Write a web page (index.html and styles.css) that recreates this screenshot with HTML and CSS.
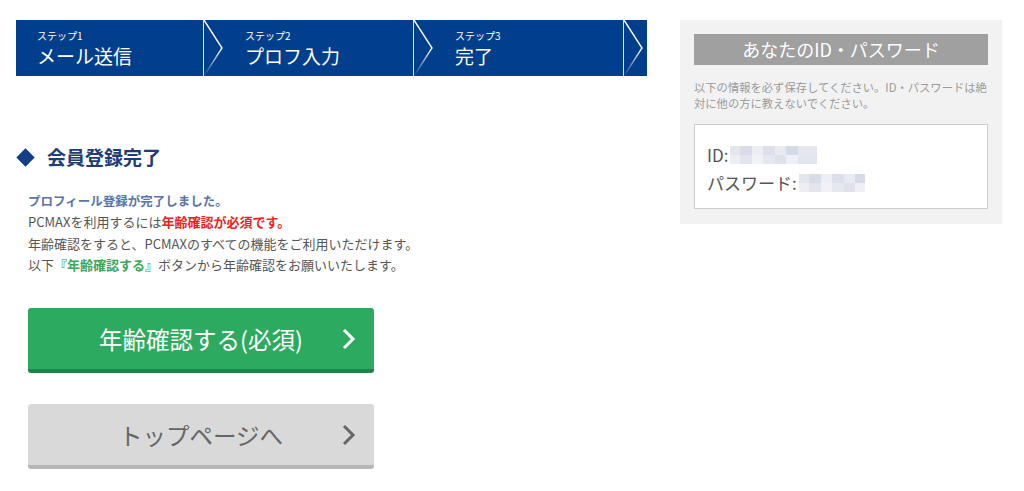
FILE: index.html
```html
<!DOCTYPE html>
<html lang="ja">
<head>
    <meta charset="UTF-8">
    <meta name="viewport" content="width=device-width, initial-scale=1.0">
    <title>会員登録完了</title>
    <link rel="stylesheet" href="styles.css">
</head>
<body>
    <div class="page">
        <div class="main">
            <div class="steps">
                <div class="step first">
                    <span class="step-no">ステップ1</span>
                    <span class="step-name">メール送信</span>
                </div>
                <svg class="sep" width="20" height="56" viewBox="0 0 20 56">
                    <defs>
                        <linearGradient id="fade" x1="0" y1="0" x2="0" y2="1">
                            <stop offset="0" stop-color="#fff"/>
                            <stop offset="0.5" stop-color="#fff"/>
                            <stop offset="1" stop-color="#fff" stop-opacity="0"/>
                        </linearGradient>
                    </defs>
                    <line x1="0.5" y1="0" x2="0.5" y2="56" stroke="#dfe6f2" stroke-width="1"/>
                    <polyline points="1,0 19,28 1,56" fill="none" stroke="url(#fade)" stroke-width="1.4"/>
                </svg>
                <div class="step">
                    <span class="step-no">ステップ2</span>
                    <span class="step-name">プロフ入力</span>
                </div>
                <svg class="sep" width="20" height="56" viewBox="0 0 20 56">
                    <line x1="0.5" y1="0" x2="0.5" y2="56" stroke="#dfe6f2" stroke-width="1"/>
                    <polyline points="1,0 19,28 1,56" fill="none" stroke="url(#fade)" stroke-width="1.4"/>
                </svg>
                <div class="step">
                    <span class="step-no">ステップ3</span>
                    <span class="step-name">完了</span>
                </div>
                <svg class="sep" width="20" height="56" viewBox="0 0 20 56">
                    <line x1="0.5" y1="0" x2="0.5" y2="56" stroke="#dfe6f2" stroke-width="1"/>
                    <polyline points="1,0 19,28 1,56" fill="none" stroke="url(#fade)" stroke-width="1.4"/>
                </svg>
                <div class="step tail"></div>
            </div>

            <h2 class="title"><span class="diamond"></span>会員登録完了</h2>

            <div class="message">
                <p class="lead">プロフィール登録が完了しました。</p>
                <p>PCMAXを利用するには<strong class="red">年齢確認が必須です。</strong></p>
                <p>年齢確認をすると、PCMAXのすべての機能をご利用いただけます。</p>
                <p>以下<strong class="green">『年齢確認する』</strong>ボタンから年齢確認をお願いいたします。</p>
            </div>

            <a class="btn btn-green" href="#">
                <span>年齢確認する(必須)</span>
                <svg class="arrow" width="14" height="22" viewBox="0 0 14 22"><polyline points="2,2 11,11 2,20" fill="none" stroke="#fff" stroke-width="3"/></svg>
            </a>
            <a class="btn btn-gray" href="#">
                <span>トップページへ</span>
                <svg class="arrow" width="14" height="22" viewBox="0 0 14 22"><polyline points="2,2 11,11 2,20" fill="none" stroke="#666" stroke-width="3"/></svg>
            </a>
        </div>

        <div class="side">
            <div class="side-title">あなたのID・パスワード</div>
            <p class="side-note">以下の情報を必ず保存してください。ID・パスワードは絶対に他の方に教えないでください。</p>
            <div class="account">
                <div class="account-row">ID:<span class="blur blur-id"></span></div>
                <div class="account-row">パスワード:<span class="blur blur-pw"></span></div>
            </div>
        </div>
    </div>
</body>
</html>
```

FILE: styles.css
```css
body {
    margin: 0;
    font-family: 'Noto Sans CJK JP', 'Noto Sans', sans-serif;
    color: #555;
    background-color: #fff;
}
.page {
    display: flex;
    align-items: flex-start;
    gap: 33px;
    padding: 20px 0 0 16px;
}
.main {
    width: 631px;
}

/* steps */
.steps {
    display: flex;
    height: 56px;
    background-color: #013e8b;
    color: #fff;
}
.step {
    width: 168px;
    padding-left: 22px;
    display: flex;
    flex-direction: column;
    justify-content: center;
    gap: 4px;
}
.step.first {
    width: 166px;
    padding-left: 21px;
}
.step.tail {
    width: 4px;
    padding: 0;
}
.sep {
    display: block;
    flex: none;
}
.step-no {
    font-size: 10px;
    line-height: 11px;
}
.step-name {
    font-size: 19px;
    line-height: 22px;
}

/* heading */
.title {
    display: flex;
    align-items: center;
    margin: 68px 0 0;
    font-size: 19px;
    line-height: 26px;
    font-weight: 700;
    color: #1d3c78;
}
.diamond {
    width: 13px;
    height: 13px;
    margin: 0 15px 0 3px;
    background-color: #123f88;
    transform: rotate(45deg);
}

.message {
    margin: 20px 0 0 12px;
    font-size: 13px;
    line-height: 21.3px;
}
.message p {
    margin: 0;
}
.message .lead {
    font-size: 12.5px;
    font-weight: 700;
    color: #5a74a6;
}
.red {
    color: #f51d1d;
}
.green {
    color: #3ea55a;
}

/* buttons */
.btn {
    display: flex;
    align-items: center;
    justify-content: center;
    position: relative;
    width: 346px;
    height: 61px;
    margin-left: 12px;
    border-radius: 3px;
    font-size: 23.5px;
    text-decoration: none;
}
.btn .arrow {
    position: absolute;
    right: 18px;
    top: 20px;
}
.btn-green {
    margin-top: 33px;
    background-color: #2caa60;
    border-bottom: 4px solid #24804a;
    color: #fff;
}
.btn-gray {
    margin-top: 31px;
    background-color: #d9d9d9;
    border-bottom: 4px solid #b6b6b6;
    color: #666;
}

/* side */
.side {
    width: 294px;
    padding: 14px 14px 15px;
    background-color: #f2f2f2;
}
.side-title {
    height: 31px;
    line-height: 31px;
    text-align: center;
    background-color: #a0a0a0;
    color: #fff;
    font-size: 18px;
}
.side-note {
    margin: 14px 0 13px;
    font-size: 11.3px;
    line-height: 16px;
    color: #9a9a9a;
}
.account {
    padding: 16px 12px 11px;
    background-color: #fff;
    border: 1px solid #cdcdcd;
}
.account-row {
    display: flex;
    align-items: center;
    font-size: 17px;
    line-height: 28px;
    color: #555;
}
.blur {
    display: inline-block;
    height: 18px;
    margin-left: 2px;
    background:
        linear-gradient(90deg, #e4e6ee 0 10px, #d8dce8 10px 22px, #eceef4 22px 33px, #dde0ea 33px 45px, #e9ebf2 45px 56px, #d6dae7 56px 68px, #e4e7ef 68px) 0 0 / 100% 9px no-repeat,
        linear-gradient(90deg, #eceef4 0 10px, #e2e5ee 10px 22px, #f1f2f6 22px 33px, #e6e8f0 33px 45px, #dfe2eb 45px 56px, #eef0f5 56px 68px, #e2e5ed 68px) 0 9px / 100% 9px no-repeat;
}
.blur-id {
    width: 87px;
}
.blur-pw {
    width: 66px;
}
```
